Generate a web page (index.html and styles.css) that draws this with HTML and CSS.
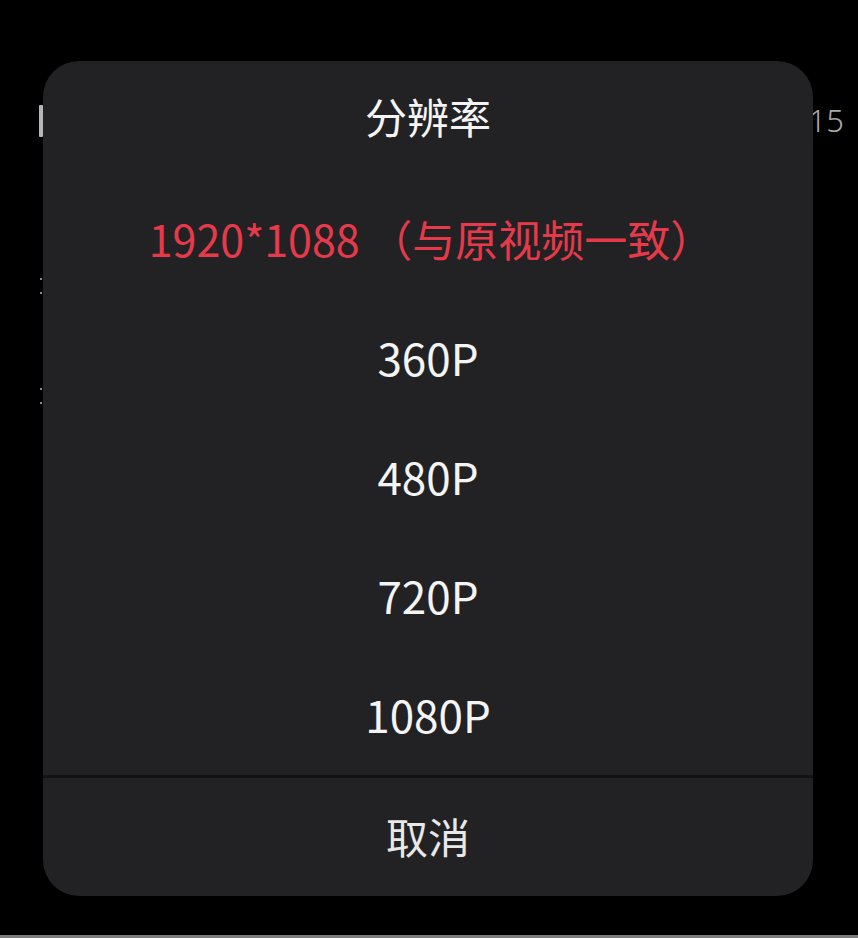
FILE: index.html
```html
<!DOCTYPE html>
<html lang="zh-CN">
<head>
<meta charset="utf-8">
<title>分辨率</title>
<link rel="stylesheet" href="styles.css">
</head>
<body>
<div class="screen">
  <div class="page">
    <div class="page-header">
      <span class="cursor"></span>
      <span class="time">15</span>
    </div>
    <div class="page-row row-a"><span class="dot"></span><span class="dot"></span></div>
    <div class="page-row row-b"><span class="dot"></span><span class="dot"></span></div>
    <div class="bottom-bar"></div>
  </div>

  <div class="dialog">
    <div class="dialog-title">分辨率</div>
    <ul class="options">
      <li class="option selected">1920*1088 （与原视频一致）</li>
      <li class="option">360P</li>
      <li class="option">480P</li>
      <li class="option">720P</li>
      <li class="option">1080P</li>
    </ul>
    <div class="divider"></div>
    <div class="cancel">取消</div>
  </div>
</div>
</body>
</html>
```

FILE: styles.css
```css
html, body {
  margin: 0;
  padding: 0;
  background: #000;
}

body {
  font-family: "Noto Sans CJK SC", "Noto Sans", sans-serif;
  color: #f2f2f2;
}

.screen {
  position: relative;
  width: 858px;
  height: 938px;
  overflow: hidden;
  background: #000;
}

/* background page (mostly hidden by the dialog) */
.page {
  display: flex;
  flex-direction: column;
  height: 100%;
}

.page-header {
  display: flex;
  justify-content: space-between;
  align-items: flex-start;
  padding: 105px 14px 0 39px;
  height: 34px;
}

.cursor {
  display: block;
  width: 4px;
  height: 32px;
  background: #b5b5b5;
  border-radius: 1px;
}

.time {
  font-family: "Noto Sans", sans-serif;
  font-weight: 300;
  font-size: 31px;
  line-height: 30px;
  color: #a9a9a9;
}

.page-row {
  display: flex;
  flex-direction: column;
  gap: 12px;
  padding-left: 40px;
}

.row-a {
  margin-top: 139px;
}

.row-b {
  margin-top: 94px;
}

.dot {
  display: block;
  width: 2px;
  height: 2px;
  background: #8a8a8a;
}

.bottom-bar {
  margin-top: auto;
  height: 3px;
  background: #7c7c7c;
}

/* modal dialog */
.dialog {
  position: absolute;
  left: 43px;
  top: 61px;
  width: 770px;
  height: 835px;
  background: #222225;
  border-radius: 36px;
  display: flex;
  flex-direction: column;
  overflow: hidden;
}

.dialog-title {
  height: 114px;
  line-height: 110px;
  text-align: center;
  font-size: 42px;
  color: #f4f4f4;
}

.options {
  list-style: none;
  margin: 0;
  padding: 5px 0 0;
}

.option {
  height: 119px;
  line-height: 117px;
  text-align: center;
  font-size: 44px;
  color: #f4f4f4;
  white-space: nowrap;
}

.option.selected {
  color: #e63a4b;
  font-size: 43px;
  padding-left: 6px;
}

.divider {
  height: 3px;
  background: #121214;
}

.cancel {
  flex: 1;
  display: flex;
  align-items: center;
  justify-content: center;
  font-size: 42px;
  color: #e8e8e8;
  padding-bottom: 4px;
}
```
